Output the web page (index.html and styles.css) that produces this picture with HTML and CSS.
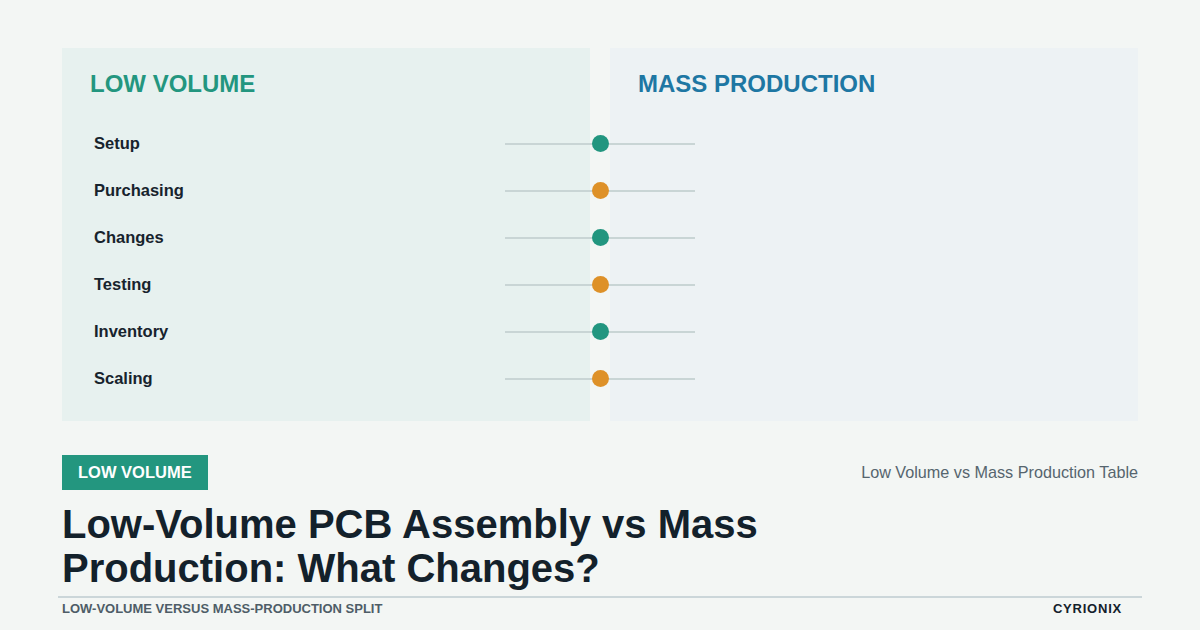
FILE: index.html
```html
<!DOCTYPE html>
<html lang="en">
<head>
<meta charset="utf-8">
<title>Low-Volume PCB Assembly vs Mass Production</title>
<link rel="stylesheet" href="styles.css">
</head>
<body>
<main class="page">
  <section class="compare">
    <div class="panel panel-low">
      <h2 class="panel-title title-low">LOW VOLUME</h2>
      <ul class="rows">
        <li class="row">Setup</li>
        <li class="row">Purchasing</li>
        <li class="row">Changes</li>
        <li class="row">Testing</li>
        <li class="row">Inventory</li>
        <li class="row">Scaling</li>
      </ul>
    </div>
    <div class="panel panel-mass">
      <h2 class="panel-title title-mass">MASS PRODUCTION</h2>
    </div>
    <div class="rails" aria-hidden="true">
      <div class="rail"><span class="dot dot-teal"></span></div>
      <div class="rail"><span class="dot dot-orange"></span></div>
      <div class="rail"><span class="dot dot-teal"></span></div>
      <div class="rail"><span class="dot dot-orange"></span></div>
      <div class="rail"><span class="dot dot-teal"></span></div>
      <div class="rail"><span class="dot dot-orange"></span></div>
    </div>
  </section>

  <section class="meta">
    <div class="meta-row">
      <span class="tag">LOW VOLUME</span>
      <span class="caption">Low Volume vs Mass Production Table</span>
    </div>
    <h1 class="headline">Low-Volume PCB Assembly vs Mass Production: What Changes?</h1>
    <div class="divider"></div>
    <footer class="footer">
      <span class="footer-left">LOW-VOLUME VERSUS MASS-PRODUCTION SPLIT</span>
      <span class="brand">CYRIONIX</span>
    </footer>
  </section>
</main>
</body>
</html>
```

FILE: styles.css
```css
* {
  box-sizing: border-box;
}

html, body {
  margin: 0;
  padding: 0;
}

body {
  width: 1200px;
  height: 630px;
  overflow: hidden;
  background: #f3f6f4;
  font-family: "Liberation Sans", Arial, sans-serif;
  color: #13212b;
}

.page {
  padding: 48px 62px 0 62px;
}

.compare {
  position: relative;
  display: grid;
  grid-template-columns: 1fr 1fr;
  column-gap: 20px;
  height: 373px;
}

.panel {
  padding: 24px 28px 0 28px;
}

.panel-low {
  background: #e7f1ef;
}

.panel-mass {
  background: #edf2f4;
}

.panel-title {
  margin: 0;
  font-size: 24px;
  line-height: 24px;
  font-weight: 700;
}

.title-low {
  color: #23967f;
}

.title-mass {
  color: #1e77a3;
}

.rows {
  list-style: none;
  margin: 24px 0 0 0;
  padding: 0 0 0 4px;
}

.row {
  height: 47px;
  line-height: 47px;
  font-size: 16.5px;
  font-weight: 700;
  color: #17232d;
}

.rails {
  position: absolute;
  left: 443px;
  top: 72px;
  width: 190px;
}

.rail {
  position: relative;
  height: 47px;
  display: flex;
  align-items: center;
  justify-content: center;
}

.rail::before {
  content: "";
  position: absolute;
  left: 0;
  right: 0;
  top: 22.5px;
  height: 2px;
  background: #c9d5d5;
}

.dot {
  position: relative;
  width: 17px;
  height: 17px;
  border-radius: 50%;
}

.dot-teal {
  background: #23967f;
}

.dot-orange {
  background: #de9128;
}

.meta {
  display: flex;
  flex-direction: column;
}

.meta-row {
  margin-top: 34px;
  display: flex;
  justify-content: space-between;
  align-items: center;
}

.tag {
  display: inline-block;
  height: 35px;
  line-height: 35px;
  padding: 0 16px;
  background: #23967f;
  color: #ffffff;
  font-size: 16.5px;
  font-weight: 700;
}

.caption {
  font-size: 16.2px;
  color: #56656e;
}

.headline {
  margin: 12px 0 0 0;
  max-width: 820px;
  font-size: 40px;
  line-height: 44px;
  font-weight: 700;
  color: #13212b;
}

.divider {
  margin: 6px -4px 0 -4px;
  height: 2px;
  background: #cbd6d9;
}

.footer {
  margin-top: 3px;
  display: flex;
  justify-content: space-between;
  align-items: center;
  padding-right: 16px;
  line-height: 16px;
  font-size: 13px;
  font-weight: 700;
}

.footer-left {
  color: #4e5d67;
}

.brand {
  color: #13212b;
  letter-spacing: 0.06em;
}
```
